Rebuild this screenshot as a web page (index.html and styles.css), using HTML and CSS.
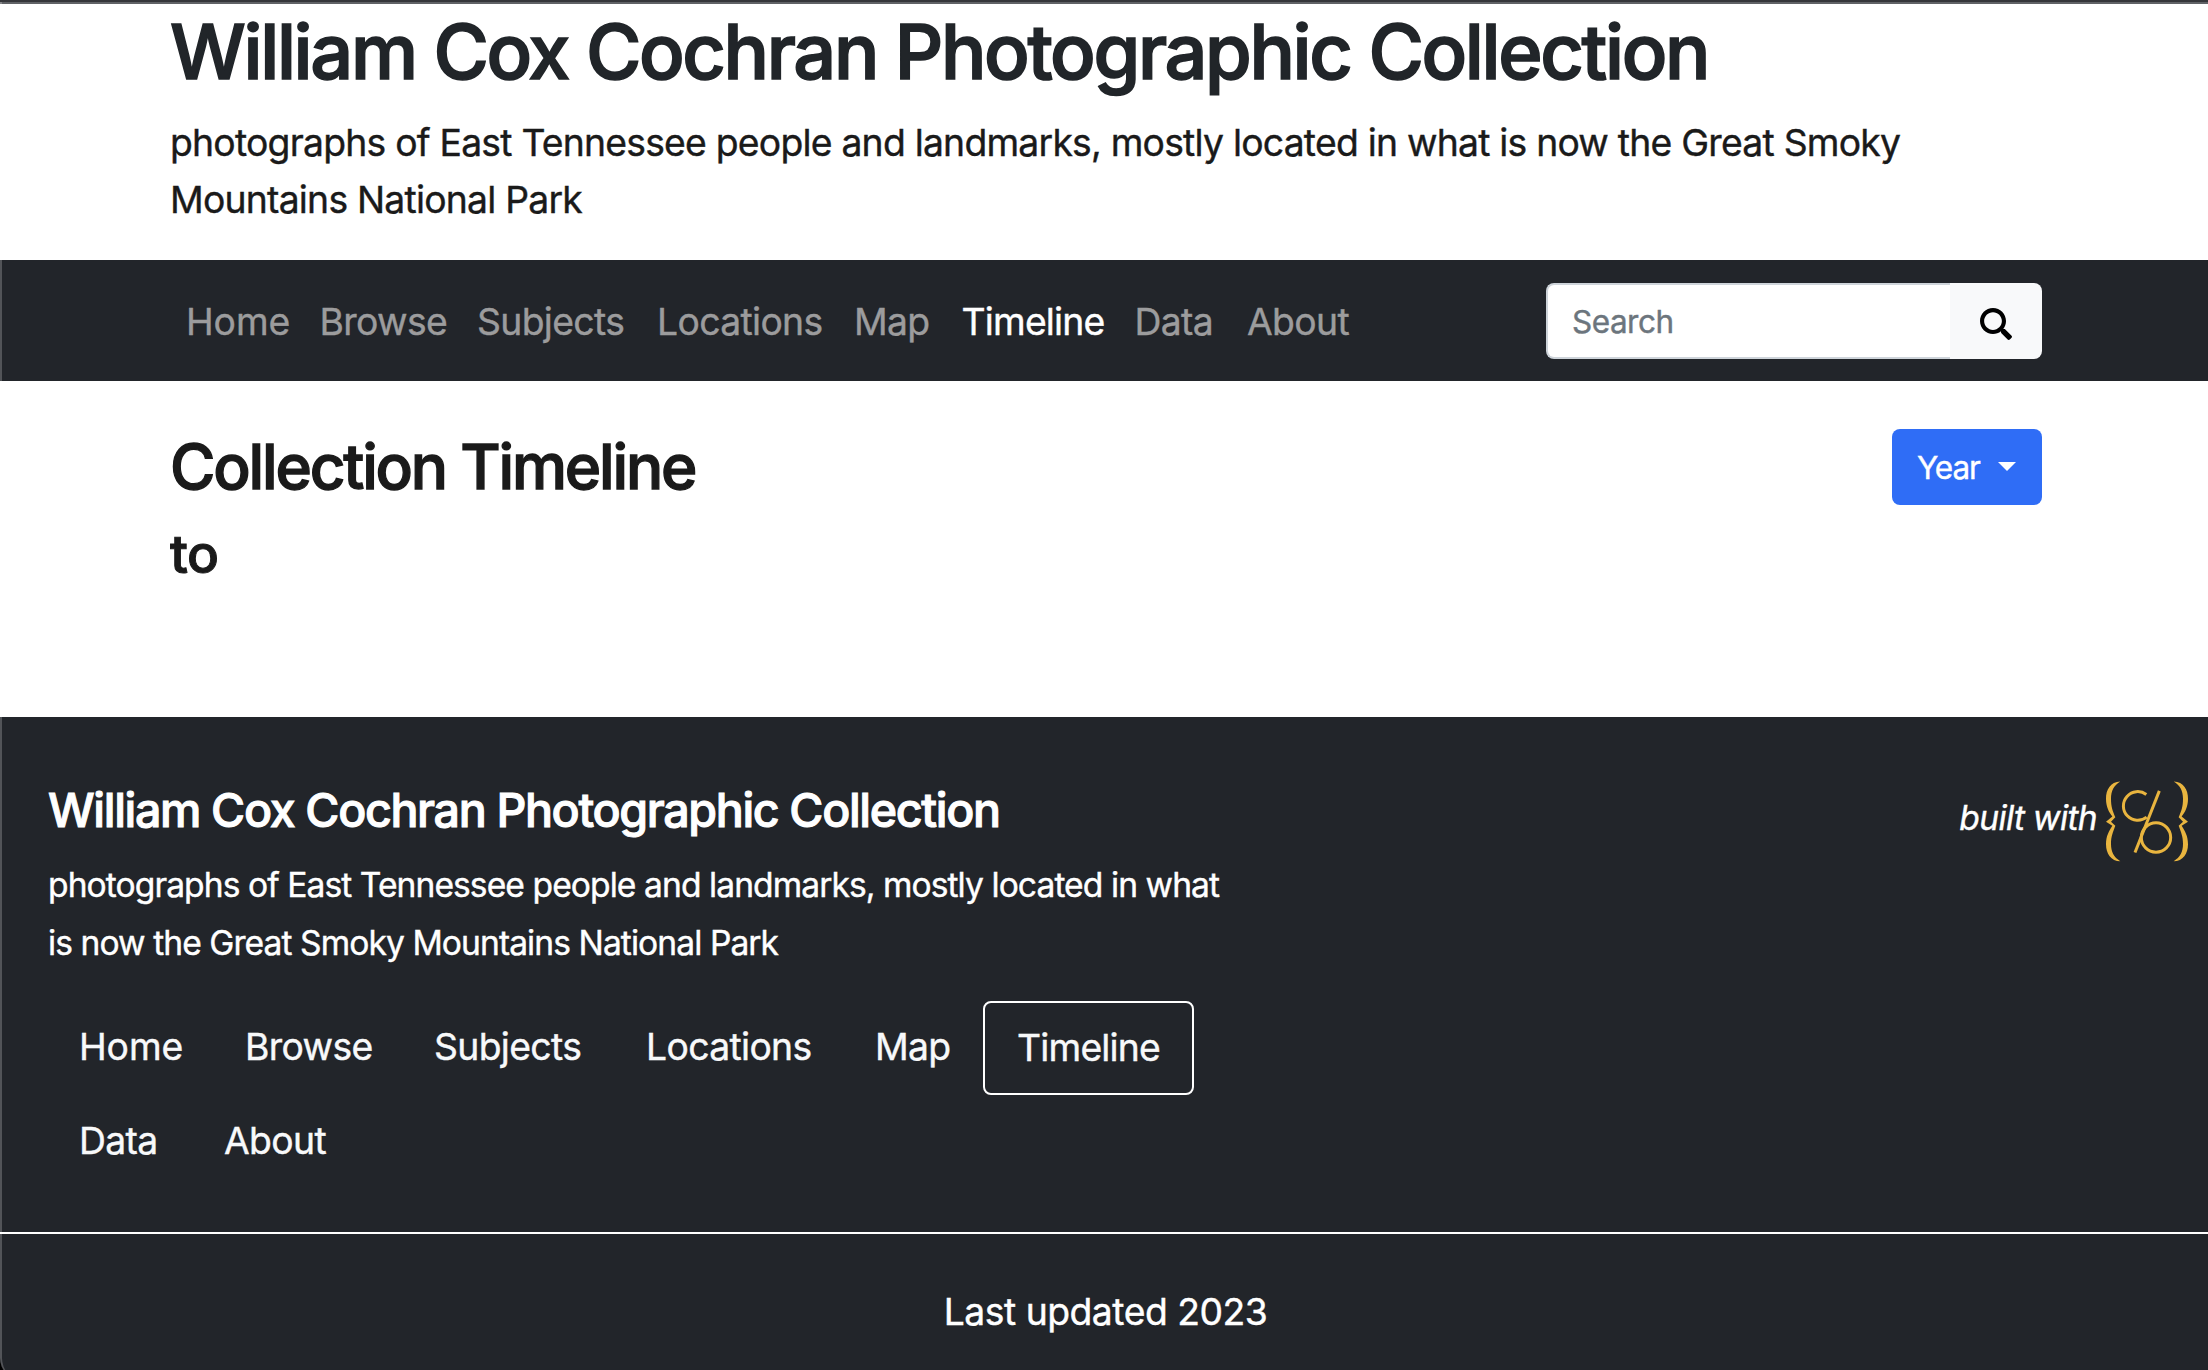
FILE: index.html
```html
<!DOCTYPE html>
<html lang="en">
<head>
<meta charset="utf-8">
<title>Timeline | William Cox Cochran Photographic Collection</title>
<link rel="stylesheet" href="styles.css">
</head>
<body>
<div class="window-edge"></div>
<header class="banner">
  <h1 class="banner-title">William Cox Cochran Photographic Collection</h1>
  <p class="banner-lead">photographs of East Tennessee people and landmarks, mostly located in what is now the Great Smoky <span class="lead-rest">Mountains National Park</span></p>
</header>
<nav class="navbar">
  <div class="nav-links">
    <a class="loose">Home</a><a>Browse</a><a>Subjects</a><a>Locations</a><a>Map</a><a class="active">Timeline</a><a>Data</a><a>About</a>
  </div>
  <form class="search">
    <input class="search-input" type="text" placeholder="Search" aria-label="Search">
    <button class="search-button" type="button" aria-label="Search">
      <svg class="search-icon" viewBox="0 0 512 512"><path d="M505 442.700L405.300 343c-4.500-4.500-10.600-7-17-7H372c27.600-35.300 44-79.700 44-128C416 93.100 322.900 0 208 0S0 93.100 0 208s93.100 208 208 208c48.300 0 92.700-16.400 128-44v16.300c0 6.400 2.500 12.500 7 17l99.700 99.700c9.400 9.400 24.600 9.400 33.900 0l28.300-28.300c9.400-9.400 9.400-24.600.1-34zM208 350c-78 0-142-64-142-142 0-78 64-142 142-142 78 0 142 64 142 142 0 78-64 142-142 142z"/></svg>
    </button>
  </form>
</nav>
<main class="content">
  <div>
    <h2 class="page-title">Collection Timeline</h2>
    <h3 class="page-range">to</h3>
  </div>
  <button class="year-button" type="button">Year<span class="caret"></span></button>
</main>
<footer class="footer">
  <div class="footer-top">
    <div class="footer-info">
      <h4 class="footer-title">William Cox Cochran Photographic Collection</h4>
      <p class="footer-lead">photographs of East Tennessee people and landmarks, mostly located in what<br>is now the Great Smoky Mountains National Park</p>
      <nav class="footer-links">
        <a class="w-home loose">Home</a><a class="w-browse">Browse</a><a class="w-subjects">Subjects</a><a class="w-locations">Locations</a><a class="w-map">Map</a><a class="current">Timeline</a><a class="w-data">Data</a><a>About</a>
      </nav>
    </div>
    <div class="credit">
      <em>built with</em>
      <svg class="logo" viewBox="498 62 246 242">
        <g fill="#e9b53f">
          <path d="M541 63C511 64 498 88 498 115C498 139 507 156 517 168L498 184L517 196C507 213 498 226 498 251C498 279 513 302 541 302C521 291 513 274 513 250C513 228 519 215 526 196L513 184L526 170C518 152 513 139 513 115C513 91 522 74 541 63Z"/>
          <path d="M541 63C511 64 498 88 498 115C498 139 507 156 517 168L498 184L517 196C507 213 498 226 498 251C498 279 513 302 541 302C521 291 513 274 513 250C513 228 519 215 526 196L513 184L526 170C518 152 513 139 513 115C513 91 522 74 541 63Z" transform="translate(1242 0) scale(-1 1)"/>
        </g>
        <g fill="none" stroke="#e9b53f" stroke-width="9">
          <path d="M619 102A43 43 0 1 0 620 170"/>
          <path d="M658 91L585 276"/>
          <circle cx="648" cy="231" r="44"/>
        </g>
      </svg>
    </div>
  </div>
  <p class="updated">Last updated 2023</p>
</footer>
</body>
</html>
```
FILE: styles.css
```css
* { box-sizing: border-box; }
html { height: 1370px; overflow: hidden; background: #22252a; }
body {
  position: relative;
  height: 1370px;
  margin: 0;
  overflow: hidden;
  border-top: 2px solid #35363a;
  background: #fff;
  font-family: Inter, "Liberation Sans", sans-serif;
  font-size: 37.3px;
  line-height: 58px;
  letter-spacing: -.5px;
  color: #1a1a1a;
  -webkit-text-stroke: .4px currentColor;
}
h1, h2, h3, h4, p { margin: 0; font-weight: 500; }
h1, h2, h3, h4 { -webkit-text-stroke: 1px currentColor; }
p { font-weight: 400; }

/* faint highlight along the window's left side */
.window-edge {
  position: absolute;
  left: 0;
  top: -2px;
  width: 40px;
  height: 1380px;
  border-left: 2px solid rgba(255, 255, 255, .22);
  border-bottom-left-radius: 22px;
  box-shadow: -20px 0 0 0 #000;
  z-index: 2;
}

.banner { height: 258px; padding: 1.500px 168px 0 170px; border-top: 2px solid #606266; }
.banner-title { font-size: 75.600px; line-height: 92px; letter-spacing: -2.340px; color: #212529; white-space: nowrap; -webkit-text-stroke-width: 1.600px; }
.banner-lead { margin-top: 16px; line-height: 57.600px; letter-spacing: -.769px; white-space: nowrap; }
.lead-rest { display: block; }

.navbar { display: flex; justify-content: space-between; height: 121px; padding: 23px 166px 0 186px; background: #22252a; }
.nav-links {
  display: grid;
  grid-template-columns: 133.500px 157.500px 180px 197px 107.500px 173px 112.500px auto;
  padding-top: 9.500px;
  color: #9c9c9d;
  white-space: nowrap;
}
.nav-links, .footer-links { letter-spacing: -.650px; }
.loose { letter-spacing: -.100px; }
.active { color: #fff; letter-spacing: -.8px; }
.search { display: flex; width: 496px; height: 76px; }
.search-input {
  width: 404px;
  padding: 0 24px 0;
  border: 2px solid #ced4da;
  border-right: 0;
  border-radius: 8px 0 0 8px;
  font: 31.500px Inter, sans-serif;
  letter-spacing: -.5px;
}
.search-input::placeholder { color: #6c757d; opacity: 1; }
.search-button { width: 92px; padding: 5px 1px 0 0; border: 0; border-radius: 0 8px 8px 0; background: #f8f9fa; }
.search-icon { display: block; width: 32px; height: 32px; margin: 0 auto; }

.content { display: flex; justify-content: space-between; align-items: flex-start; height: 336px; padding: 48px 166px 0 170px; }
.page-title { font-size: 62px; line-height: 75px; letter-spacing: -2.190px; -webkit-text-stroke-width: 1.300px; }
.page-range { margin-top: 18px; font-size: 53px; line-height: 64px; }
.year-button {
  display: flex;
  align-items: center;
  gap: 18px;
  width: 150px;
  height: 76px;
  padding: 0 25px;
  border: 0;
  border-radius: 8px;
  background: #2f6df6;
  color: #fff;
  font: 31.500px Inter, sans-serif;
  letter-spacing: -1.100px;
}
.caret { margin-top: -2px; border: 9px solid transparent; border-top-color: #fff; border-bottom: 0; }

.footer { height: 653px; background: #22252a; color: #fff; }
.footer-top { display: flex; justify-content: space-between; height: 517px; padding: 64px 20px 0 48px; border-bottom: 2px solid #fff; }
.footer-info { width: 1180px; }
.footer-title { font-size: 46.600px; line-height: 58px; letter-spacing: -1.360px; white-space: nowrap; }
.footer-lead { margin: 17px 0 29px; padding-left: -1px; font-size: 33.600px; letter-spacing: -.921px; }
.footer-links { display: flex; flex-wrap: wrap; align-items: flex-start; color: #f8f9fa; }
.footer-links a { padding: 17px 31px 15px; }
.w-home { width: 166px; }
.w-browse { width: 189px; }
.w-subjects { width: 212px; }
.w-locations { width: 229px; }
.w-map { width: 139px; }
.w-data { width: 145px; }
.footer-links .current { width: 211px; padding: 16px 32px; border: 2px solid #fff; border-radius: 8px; letter-spacing: -.8px; }
.credit { display: flex; align-items: flex-start; gap: 9px; font-size: 33.600px; letter-spacing: -.650px; }
.credit em { padding-top: 8px; }
.logo { width: 82px; height: 81px; }
.updated { padding: 48.500px 0 0 3px; text-align: center; }
```
